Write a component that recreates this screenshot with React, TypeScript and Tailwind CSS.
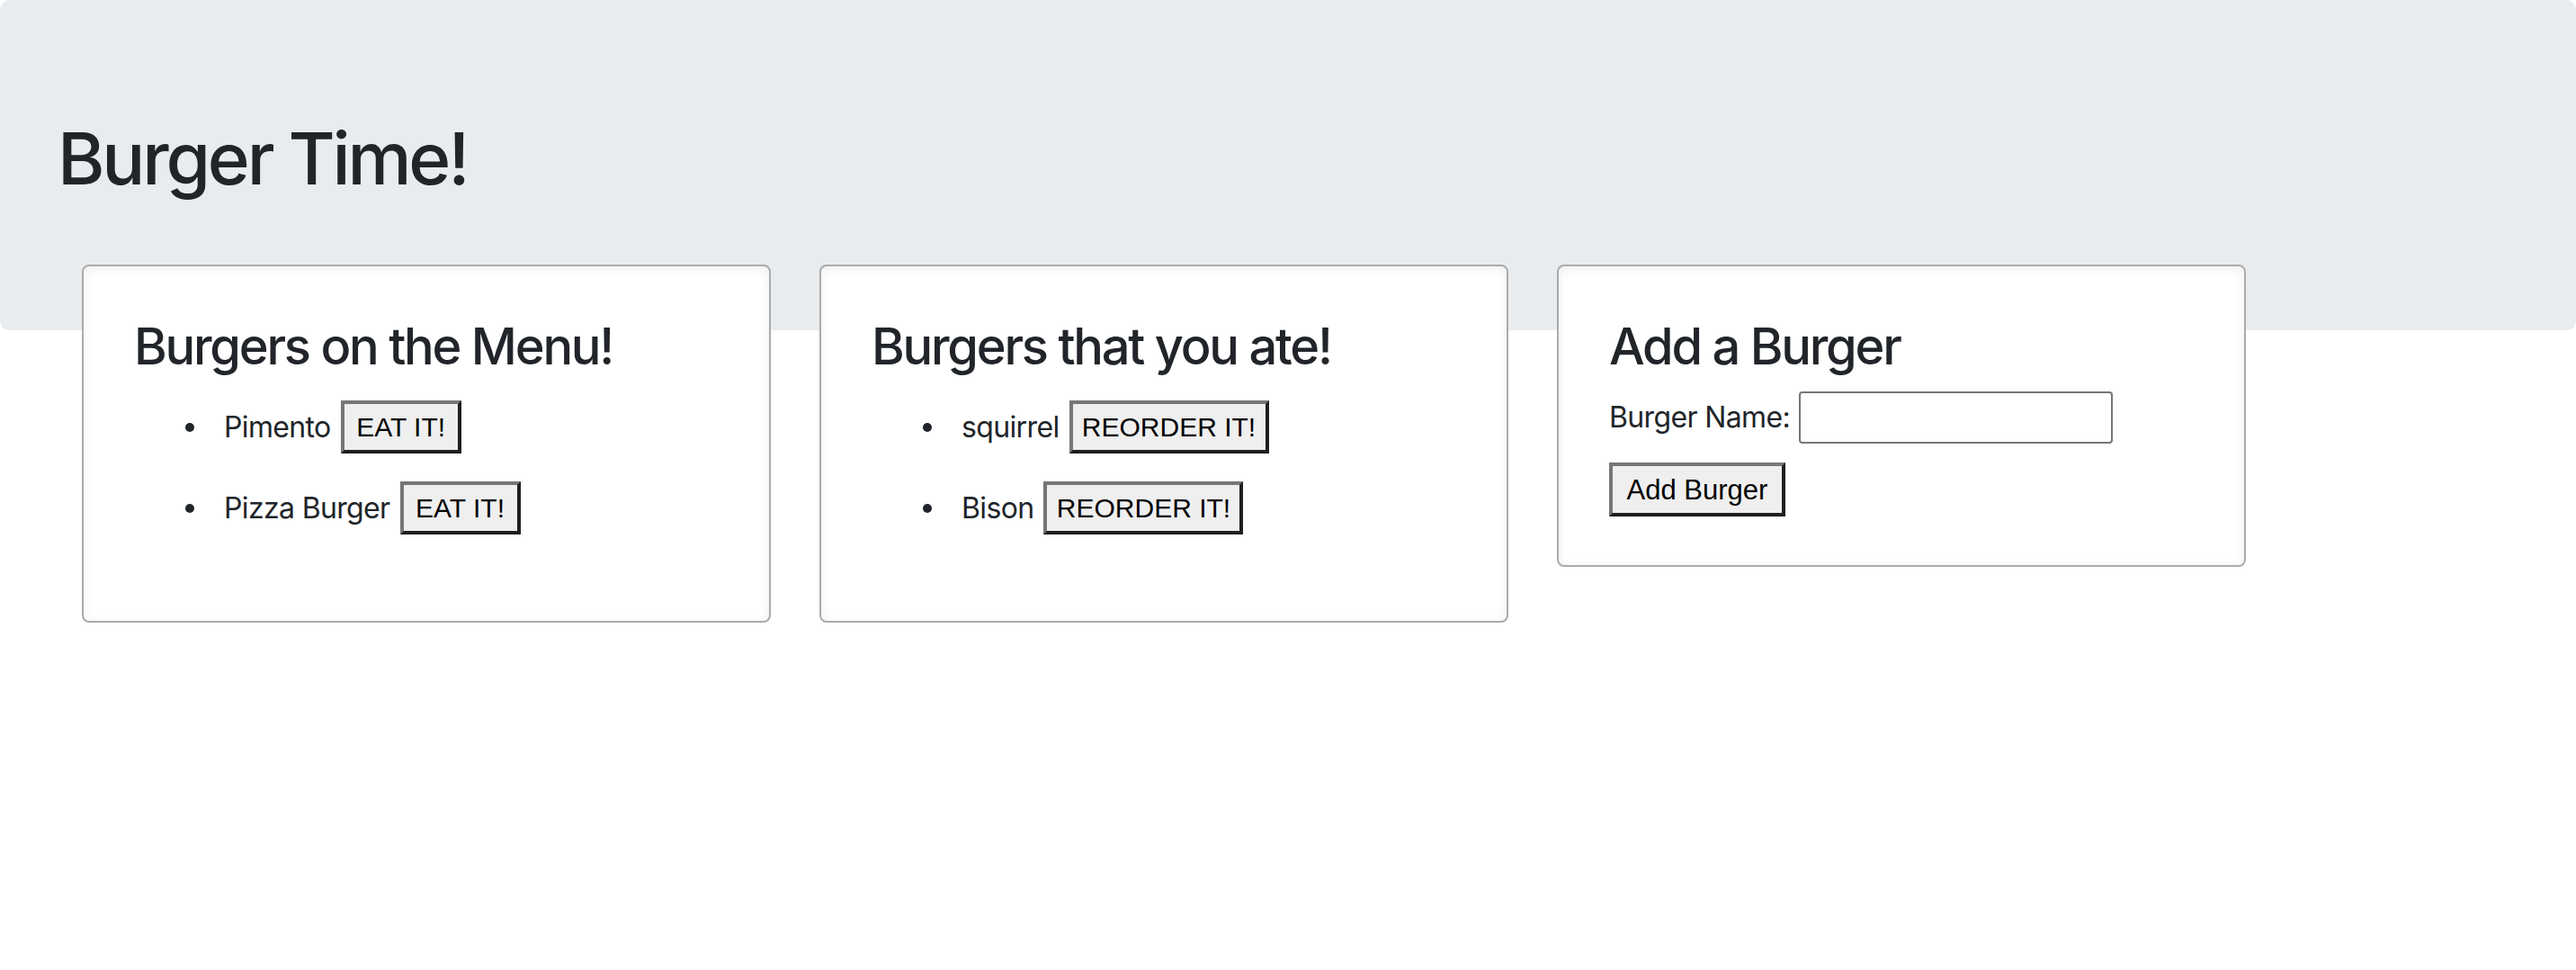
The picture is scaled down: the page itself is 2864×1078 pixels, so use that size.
import { useState } from 'react'

const menu = ['Pimento', 'Pizza Burger']
const eaten = ['squirrel', 'Bison']

function Bullet() {
  return <span className="w-[10px] h-[10px] rounded-full bg-[#212529] mr-[33px] ml-[57px] shrink-0" />
}

function OldButton({ label, width }: { label: string; width: string }) {
  return (
    <button
      type="button"
      className={`${width} h-[59px] flex items-center justify-center bg-[#efefef] border-4 border-t-[#767676] border-l-[#767676] border-b-[#1f1f1f] border-r-[#1f1f1f] text-black text-[30px] tracking-normal font-['Liberation_Sans',sans-serif] leading-none`}
    >
      {label}
    </button>
  )
}

function BurgerList({ items, label, width }: { items: string[]; label: string; width: string }) {
  return (
    <ul className="mt-[26px] flex flex-col gap-[31px]">
      {items.map((name) => (
        <li key={name} className="h-[59px] flex items-center">
          <Bullet />
          <span className="mr-[11px]">{name}</span>
          <OldButton label={label} width={width} />
        </li>
      ))}
    </ul>
  )
}

export default function App() {
  const [name, setName] = useState('')

  return (
    <div className="min-h-screen bg-white text-[#212529] font-['Inter',sans-serif] text-[32px] tracking-[-0.02em]">
      <div className="bg-[#e9ecef] rounded-[10px] px-[64px] pt-[128px] pb-[127px]">
        <h1 className="text-[80px] leading-[96px] font-medium mb-[16px] tracking-[-0.04em]">Burger Time!</h1>
      </div>

      <div className="flex items-start gap-[54px] pl-[91px] -mt-[73px]">
        <div className="w-[766px] bg-white border-2 border-[#ababab] rounded-[8px] shadow-[inset_0_2px_12px_rgba(0,0,0,0.07)] px-[56px] pt-[56px] pb-[96px]">
          <h3 className="text-[56px] leading-[67px] font-medium tracking-[-0.04em]">Burgers on the Menu!</h3>
          <BurgerList items={menu} label="EAT IT!" width="w-[134px]" />
        </div>

        <div className="w-[766px] bg-white border-2 border-[#ababab] rounded-[8px] shadow-[inset_0_2px_12px_rgba(0,0,0,0.07)] px-[56px] pt-[56px] pb-[96px]">
          <h3 className="text-[56px] leading-[67px] font-medium tracking-[-0.04em]">Burgers that you ate!</h3>
          <BurgerList items={eaten} label="REORDER IT!" width="w-[222px]" />
        </div>

        <div className="w-[766px] bg-white border-2 border-[#ababab] rounded-[8px] shadow-[inset_0_2px_12px_rgba(0,0,0,0.07)] px-[56px] pt-[56px] pb-[54px]">
          <h3 className="text-[56px] leading-[67px] font-medium tracking-[-0.04em]">Add a Burger</h3>
          <form onSubmit={(e) => e.preventDefault()} className="mt-[16px] flex flex-col gap-[21px]">
            <div className="flex items-center h-[58px]">
              <label htmlFor="burger" className="mr-[10px]">Burger Name:</label>
              <input
                id="burger"
                type="text"
                value={name}
                onChange={(e) => setName(e.target.value)}
                className="w-[349px] h-[58px] border-2 border-[#767676] rounded-[4px] bg-white px-2 outline-none"
              />
            </div>
            <div>
              <button
                type="submit"
                className="w-[196px] h-[60px] flex items-center justify-center bg-[#efefef] border-4 border-t-[#767676] border-l-[#767676] border-b-[#1f1f1f] border-r-[#1f1f1f] text-black text-[31px] tracking-normal font-['Liberation_Sans',sans-serif] leading-none"
              >
                Add Burger
              </button>
            </div>
          </form>
        </div>
      </div>
    </div>
  )
}
